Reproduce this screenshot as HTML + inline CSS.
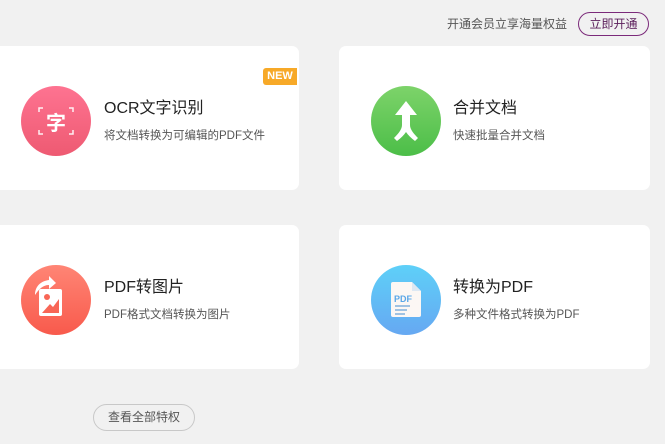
<!DOCTYPE html><html><head><meta charset="utf-8"><style>
body{margin:0;width:665px;height:444px;background:#f1f1f1;position:relative;overflow:hidden;font-family:"Liberation Sans","Noto Sans CJK SC",sans-serif;}
.a{position:absolute}
.card{position:absolute;background:#fff;border-radius:7px}
.c{position:absolute;width:70px;height:70px;border-radius:50%}
.t{position:absolute;font-size:16px;color:#222;white-space:nowrap}
.s{position:absolute;font-size:11.5px;color:#555;white-space:nowrap}
</style></head><body>
<div class="a" style="left:447px;top:15px;font-size:12px;color:#555">开通会员立享海量权益</div>
<div class="a" style="left:578px;top:12px;width:69px;height:22px;border:1px solid #7b2a7a;border-radius:12px;font-size:12px;color:#5a1d5a;text-align:center;line-height:22px">立即开通</div>

<div class="card" style="left:-10px;top:46px;width:309px;height:144px"></div>
<div class="card" style="left:339px;top:46px;width:311px;height:144px"></div>
<div class="card" style="left:-10px;top:225px;width:309px;height:144px"></div>
<div class="card" style="left:339px;top:225px;width:311px;height:144px"></div>

<div class="a" style="left:263px;top:68px;width:34px;height:17px;background:#f7a928;border-radius:3px 0 0 3px;color:#fff;font-size:11px;font-weight:bold;text-align:center;line-height:17px">NEW</div>

<div class="c" style="left:21px;top:86px;background:linear-gradient(#fe7391,#ee5a72)">
<svg width="70" height="70" style="position:absolute;left:0;top:0"><g stroke="#fff" stroke-width="1.5" fill="none" opacity=".9"><path d="M18 26v-4h4M48 22h4v4M52 44v4h-4M22 48h-4v-4"/></g><text x="35" y="44" font-size="20" font-weight="bold" fill="#fff" text-anchor="middle" font-family="Noto Sans CJK SC,sans-serif">字</text></svg></div>
<div class="t" style="left:104px;top:94px">OCR文字识别</div>
<div class="s" style="left:104px;top:127px">将文档转换为可编辑的PDF文件</div>

<div class="c" style="left:371px;top:86px;background:linear-gradient(#7dd36a,#4cbe48)">
<svg width="70" height="70" style="position:absolute;left:0;top:0"><path d="M35 15l-11 14h7v10c0 4-3 8-8 13l3 3c4-3 7-6 9-9 2 3 5 6 9 9l3-3c-5-5-8-9-8-13V29h7z" fill="#fff"/></svg></div>
<div class="t" style="left:453px;top:94px">合并文档</div>
<div class="s" style="left:453px;top:127px">快速批量合并文档</div>

<div class="c" style="left:21px;top:265px;background:linear-gradient(#ff8575,#f85a4c)">
<svg width="70" height="70" style="position:absolute;left:0;top:0"><path d="M14 30c0-9 6-14 14-15v-4l7 7-7 6v-4c-6 0-10 4-14 10z" fill="#fff"/><rect x="18" y="24" width="23" height="27" rx="2" fill="#fff"/><circle cx="26" cy="32" r="3" fill="#f86656"/><path d="M21 48l8-9 3 3 6-8v14z" fill="#f86656"/></svg></div>
<div class="t" style="left:104px;top:273px">PDF转图片</div>
<div class="s" style="left:104px;top:306px">PDF格式文档转换为图片</div>

<div class="c" style="left:371px;top:265px;background:linear-gradient(#5ed0f8,#66a8f2)">
<svg width="70" height="70" style="position:absolute;left:0;top:0"><path d="M22 17h19l9 9v24a2 2 0 0 1-2 2H22a2 2 0 0 1-2-2V19a2 2 0 0 1 2-2z" fill="#fcf7f4"/><path d="M41 17v9h9z" fill="#dde8f3"/><text x="23" y="37" font-size="9" font-weight="bold" fill="#5aa7e8" font-family="Liberation Sans">PDF</text><path d="M24 41h15M24 45h12M24 49h10" stroke="#6aa2d8" stroke-width="1.3"/></svg></div>
<div class="t" style="left:453px;top:273px">转换为PDF</div>
<div class="s" style="left:453px;top:306px">多种文件格式转换为PDF</div>

<div class="a" style="left:93px;top:404px;width:100px;height:25px;border:1px solid #c8c8c8;border-radius:14px;font-size:12px;color:#555;text-align:center;line-height:25px">查看全部特权</div>
</body></html>
